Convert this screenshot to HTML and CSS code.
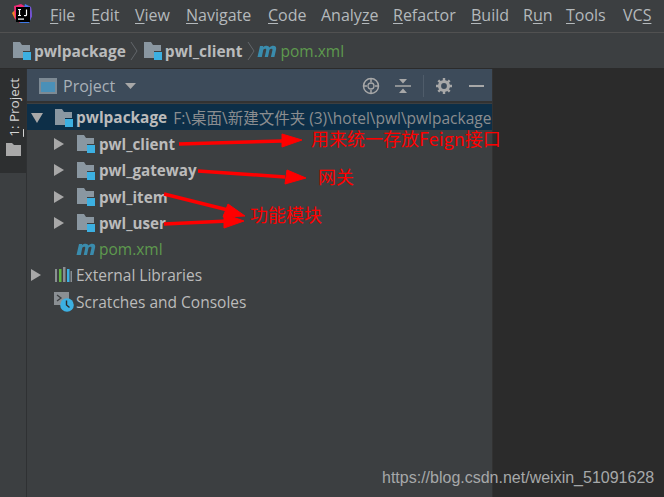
FILE: index.html
```html
<!DOCTYPE html>
<html lang="zh">
<head>
<meta charset="utf-8">
<title>IDEA Project</title>
<link rel="stylesheet" href="styles.css">
</head>
<body>
<svg width="0" height="0" class="defs">
  <defs>
    <symbol id="module" viewBox="0 0 21 19">
      <path d="M1 1h7l2 3h8v6h-7v7H1z" fill="#8a97a1"/>
      <rect x="11" y="11" width="8" height="8" fill="#3cb0e2"/>
    </symbol>
    <symbol id="maven" viewBox="0 0 20 14">
      <path d="M0.500 13 L3 2h3.200l-.3 1.300C7 2 8.500 1.700 9.700 1.700c1.400 0 2.300.7 2.600 1.800C13.500 2.300 15 1.700 16.300 1.700c2.300 0 3.300 1.400 2.800 3.700L17.400 13h-3.500l1.500-6.700c.2-1-.1-1.500-.9-1.500-.8 0-1.500.4-2 1L11 13H7.700l1.500-6.700c.2-1-.1-1.500-.9-1.500-.8 0-1.500.4-2 1L4.800 13z" fill="#3a8cad"/>
    </symbol>
    <symbol id="tri-right" viewBox="0 0 10 12">
      <path d="M0 0l10 6-10 6z" fill="#a8a8a8"/>
    </symbol>
  </defs>
</svg>
<div class="app">
  <header class="menubar">
    <svg class="logo" viewBox="0 0 22 22" width="22" height="22">
      <path d="M1 10L4 7l3 7-3 2z" fill="#f58a1f"/>
      <path d="M3 3l7-2 5 3-6 16-5-4z" fill="#ee2a74"/>
      <path d="M14 1l6 3 1 9-3 7-9 0z" fill="#3f7ae8"/>
      <path d="M17 3l3 1 1 9-2 4z" fill="#7a4fd0"/>
      <rect x="5" y="4" width="14" height="15" fill="#000"/>
      <path d="M7 6.500h3M8.500 6.500v6M7 12.500h3M15.500 6.500v5.500c0 .6-1 .8-2.500.5" stroke="#fff" stroke-width="1.200" fill="none"/>
      <rect x="7" y="15.500" width="6" height="1.200" fill="#fff"/>
    </svg>
    <nav class="menu">
      <span class="m-file"><u>F</u>ile</span>
      <span class="m-edit"><u>E</u>dit</span>
      <span class="m-view"><u>V</u>iew</span>
      <span class="m-nav"><u>N</u>avigate</span>
      <span class="m-code"><u>C</u>ode</span>
      <span class="m-ana">Analy<u>z</u>e</span>
      <span class="m-ref"><u>R</u>efactor</span>
      <span class="m-build"><u>B</u>uild</span>
      <span class="m-run">R<u>u</u>n</span>
      <span class="m-tools"><u>T</u>ools</span>
      <span class="m-vcs">VC<u>S</u></span>
    </nav>
  </header>
  <div class="crumbs">
    <svg class="ic-mod"><use href="#module"/></svg>
    <b>pwlpackage</b>
    <svg class="chev" viewBox="0 0 8 20" width="8" height="20"><path d="M1 1l6 9-6 9" stroke="#62666a" fill="none"/></svg>
    <svg class="ic-mod"><use href="#module"/></svg>
    <b>pwl_client</b>
    <svg class="chev" viewBox="0 0 8 20" width="8" height="20"><path d="M1 1l6 9-6 9" stroke="#62666a" fill="none"/></svg>
    <svg class="ic-mvn"><use href="#maven"/></svg>
    <span class="green">pom.xml</span>
  </div>
  <div class="body">
    <aside class="strip">
      <div class="tab">
        <span class="tab-label"><u>1</u>: Project</span>
        <svg class="tab-folder" viewBox="0 0 15 13" width="15" height="13"><path d="M0 0h6l2 2h7v11H0z" fill="#a9a9a9"/></svg>
      </div>
    </aside>
    <section class="panel">
      <div class="panel-head">
        <svg class="proj-ic" viewBox="0 0 18 16" width="18" height="16"><rect x="0" y="0" width="18" height="16" fill="#7d8a94"/><rect x="2" y="4" width="14" height="10" fill="#4a90b8"/></svg>
        <span class="proj-title">Project</span>
        <svg class="caret" viewBox="0 0 11 6" width="11" height="6"><path d="M0 0h11L5.500 6z" fill="#a8a8a8"/></svg>
        <div class="tools">
          <svg viewBox="0 0 18 18" width="18" height="18" class="t-target"><circle cx="9" cy="9" r="7.500" fill="none" stroke="#a8a8a8" stroke-width="1.500"/><circle cx="9" cy="9" r="3" fill="none" stroke="#a8a8a8" stroke-width="1.300"/><path d="M9 1v4M9 13v4M1 9h4M13 9h4" stroke="#a8a8a8" stroke-width="1.500"/></svg>
          <svg viewBox="0 0 16 16" width="16" height="16" class="t-collapse"><path d="M0 8h16" stroke="#a8a8a8" stroke-width="1.500"/><path d="M4 1h8L8 5.500zM4 15h8L8 10.500z" fill="#a8a8a8"/></svg>
          <span class="t-sep"></span>
          <svg viewBox="0 0 16 16" width="16" height="16" class="t-gear"><circle cx="8" cy="8" r="4.500" fill="none" stroke="#a8a8a8" stroke-width="3.200"/><path d="M8 0v3M8 13v3M0 8h3M13 8h3M2.300 2.300l2.100 2.100M11.600 11.600l2.100 2.100M2.300 13.700l2.100-2.100M11.600 4.400l2.100-2.100" stroke="#a8a8a8" stroke-width="2.400"/></svg>
          <span class="t-min"></span>
        </div>
      </div>
      <div class="tree">
        <div class="row selected lv0">
          <svg class="tri tri-down" viewBox="0 0 12 10" width="12" height="10"><path d="M0 0h12L6 10z" fill="#a8a8a8"/></svg>
          <svg class="ic-mod"><use href="#module"/></svg>
          <b>pwlpackage</b>
          <span class="path">F:\桌面\新建文件夹 (3)\hotel\pwl\pwlpackage</span>
        </div>
        <div class="row lv1"><svg class="tri"><use href="#tri-right"/></svg><svg class="ic-mod"><use href="#module"/></svg><b>pwl_client</b></div>
        <div class="row lv1"><svg class="tri"><use href="#tri-right"/></svg><svg class="ic-mod"><use href="#module"/></svg><b>pwl_gateway</b></div>
        <div class="row lv1"><svg class="tri"><use href="#tri-right"/></svg><svg class="ic-mod"><use href="#module"/></svg><b>pwl_item</b></div>
        <div class="row lv1"><svg class="tri"><use href="#tri-right"/></svg><svg class="ic-mod"><use href="#module"/></svg><b>pwl_user</b></div>
        <div class="row lv1 no-tri"><svg class="ic-mvn"><use href="#maven"/></svg><span class="green">pom.xml</span></div>
        <div class="row lv0">
          <svg class="tri"><use href="#tri-right"/></svg>
          <svg class="ic-16" viewBox="0 0 18 18" width="18" height="18"><path d="M1 3h2v13H1z" fill="#8a8f93"/><path d="M5 3h2.500v13H5z" fill="#62b543"/><path d="M9 1h2.500v15H9z" fill="#8a8f93"/><path d="M13 3h2.500v13H13z" fill="#3cb0e2"/><path d="M16.500 5H18v11h-1.500z" fill="#8a8f93"/></svg>
          <span>External Libraries</span>
        </div>
        <div class="row lv0 no-tri">
          <svg class="ic-16" viewBox="0 0 20 20" width="20" height="20"><rect x="0" y="0" width="15" height="13" fill="#8a8f93"/><path d="M3 3l4 3-4 3" stroke="#3c3f41" stroke-width="1.300" fill="none"/><circle cx="13" cy="13" r="6.800" fill="#3cb0e2"/><path d="M12.500 8.500V13l3 2.500" stroke="#2b2b2b" stroke-width="1.400" fill="none"/></svg>
          <span>Scratches and Consoles</span>
        </div>
      </div>
    </section>
    <div class="editor"></div>
  </div>
  <svg class="arrows" viewBox="0 0 664 497" width="664" height="497">
    <g fill="#fe0000" stroke="#fe0000">
      <path d="M179 144L282 141" stroke-width="3.500"/><path d="M282 134l20 6-20 7z"/>
      <path d="M198 171L285 177" stroke-width="3.500"/><path d="M287 170l19 8-21 6z"/>
      <path d="M164 194L232 211" stroke-width="3.500"/><path d="M228 204l17 12-22 1z"/>
      <path d="M164 224L228 221" stroke-width="3.500"/><path d="M224 214l20 7-20 7z"/>
    </g>
  </svg>
  <span class="note n1">用来统一存放Feign接口</span>
  <span class="note n2">网关</span>
  <span class="note n3">功能模块</span>
  <span class="watermark">https://blog.csdn.net/weixin_51091628</span>
</div>
</body>
</html>
```
FILE: styles.css
```css
* { box-sizing: border-box; }
html, body { margin: 0; padding: 0; }
body { background: #3c3f41; overflow: hidden; }
.defs { position: absolute; }
.app {
  position: relative;
  width: 664px;
  height: 497px;
  display: flex;
  flex-direction: column;
  font-family: "Open Sans", "Noto Sans CJK SC", sans-serif;
  font-size: 15.500px;
  color: #bbbbbb;
  background: #3c3f41;
  overflow: hidden;
}
u { text-underline-offset: 2px; text-decoration-thickness: 1px; }
b { font-weight: 700; }
.green { color: #5e9a4e; }

.menubar {
  height: 33px;
  flex: none;
  display: flex;
  align-items: center;
  padding-left: 11px;
  border-bottom: 1px solid #515151;
}
.logo { flex: none; margin-top: -4px; }
.menu { display: flex; margin-left: 17px; white-space: nowrap; color: #b4b9bc; font-size: 16px; margin-top: -2px; }
.menu span { display: block; }
.m-file { width: 41px; }
.m-edit { width: 44px; }
.m-view { width: 51px; }
.m-nav { width: 82px; }
.m-code { width: 53px; }
.m-ana { width: 72px; }
.m-ref { width: 78px; }
.m-build { width: 52px; }
.m-run { width: 43px; }
.m-tools { width: 57px; }

.crumbs {
  height: 36px;
  flex: none;
  display: flex;
  align-items: center;
  padding-left: 12px;
  border-bottom: 1px solid #2b2b2b;
  white-space: nowrap;
}
.crumbs b { margin-left: 1px; font-size: 15.500px; color: #b9bbbc; }
.crumbs .chev { margin: 0 5px 0 4px; }
.crumbs .ic-mvn { margin-left: -3px; }
.crumbs .green { margin-left: 4px; }
.ic-mod { width: 21px; height: 19px; flex: none; }
.ic-mvn { width: 20px; height: 14px; flex: none; }

.body { flex: 1; display: flex; min-height: 0; }
.strip { width: 27px; flex: none; border-right: 1px solid #2f3133; }
.tab {
  background: #2d2f30;
  height: 104px;
  display: flex;
  flex-direction: column;
  align-items: center;
  padding-top: 9px;
}
.tab-label {
  writing-mode: vertical-rl;
  transform: rotate(180deg);
  font-size: 13.500px;
  color: #d4d4d4;
  line-height: 16px;
  white-space: nowrap;
  margin-left: 1px;
}
.tab-folder { margin-top: 6px; }

.panel { width: 466px; flex: none; display: flex; flex-direction: column; border-right: 1px solid #323232; }
.panel-head {
  height: 34px;
  flex: none;
  background: #3d4b5a;
  border-bottom: 2px solid #323232;
  display: flex;
  align-items: center;
  padding-left: 12px;
}
.proj-title { margin: 2px 0 0 6px; color: #a9b1b8; font-size: 16px; }
.caret { margin: 2px 0 0 10px; }
.proj-ic { margin-top: 1px; }
.tools { margin-left: auto; display: flex; align-items: center; padding: 1px 8px 0 0; }
.t-collapse { margin-left: 15px; }
.t-sep { width: 1px; height: 22px; background: #4f5c6a; margin-left: 12px; }
.t-gear { margin-left: 12px; }
.t-min { width: 15px; height: 2px; background: #a8a8a8; margin-left: 17px; }

.tree { flex: 1; padding-top: 1px; }
.row {
  height: 26.300px;
  padding-top: 1px;
  display: flex;
  align-items: center;
  white-space: nowrap;
  overflow: hidden;
}
.row b { margin-left: 2px; font-size: 15.200px; }
.selected { background: #0d2f48; }
.selected b { font-size: 15.400px; margin-left: 1px; }
.tri { width: 10px; height: 12px; flex: none; }
.tri-down { width: 12px; height: 10px; }
.lv0 { padding-left: 4px; }
.lv1 { padding-left: 27px; }
.lv0 .ic-mod { margin-left: 11px; }
.lv1 .ic-mod { margin-left: 12px; }
.lv1.no-tri { padding-left: 49px; }
.lv1.no-tri .green { margin-left: 3px; }
.lv0 .ic-16 { margin-left: 13px; flex: none; }
.lv0 span { margin-left: 4px; }
.lv0.no-tri { padding-left: 27px; }
.lv0.no-tri .ic-16 { margin-left: 0; }
.lv0.no-tri span { margin-left: 2px; }
.lv0 .path { margin-left: 6px; color: #8b8d8f; font-size: 15.500px; }

.editor { flex: 1; background: #2b2b2b; }

.arrows { position: absolute; left: 0; top: 0; pointer-events: none; }
.note { position: absolute; color: #fe0000; font-family: "Noto Sans CJK SC", sans-serif; font-size: 18px; line-height: 22px; white-space: nowrap; }
.n1 { left: 311px; top: 127px; }
.n2 { left: 318px; top: 165px; }
.n3 { left: 250px; top: 203px; }
.watermark { position: absolute; left: 382px; top: 469px; font-family: "Liberation Sans", sans-serif; font-size: 16px; line-height: 18px; color: #a6a8a9; white-space: nowrap; }
```
